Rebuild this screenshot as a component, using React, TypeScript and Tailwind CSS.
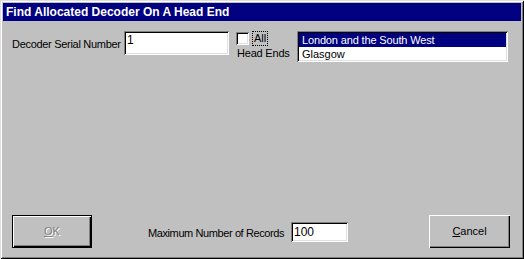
import React from "react";

const sunken =
  "shadow-[inset_1px_1px_0_#808080,inset_-1px_-1px_0_#ffffff,inset_2px_2px_0_#000000,inset_-2px_-2px_0_#dfdfdf]";

export default function App() {
  return (
    <div
      className="w-[524px] h-[259px] bg-[#c0c0c0] p-[3px] flex flex-col shadow-[inset_1px_1px_0_#dfdfdf,inset_-1px_-1px_0_#000000,inset_2px_2px_0_#ffffff,inset_-2px_-2px_0_#808080] text-black whitespace-nowrap"
      style={{ fontFamily: '"Liberation Sans", Arial, sans-serif' }}
    >
      <div className="h-[18px] bg-[#000080] text-white font-bold text-[12px] leading-[18px] pl-[3px]">
        Find Allocated Decoder On A Head End
      </div>
      <div className="flex-1 flex flex-col pl-[9px] pr-[11px] pt-[10px] pb-[8px]">
        <div className="flex items-start">
          <div className="h-[24px] flex items-center pt-[3px] text-[11px] w-[112px] tracking-[-0.3px]">
            Decoder Serial Number
          </div>
          <div className={`w-[105px] h-[24px] bg-white ${sunken} pl-[3px] pt-[2px] text-[12px] leading-[14px]`}>
            1
          </div>
          <div className="ml-[7px] pt-[1px] flex flex-col w-[61px]">
            <div className="flex items-center">
              <div className={`w-[13px] h-[13px] bg-white ${sunken}`} />
              <span className="ml-[4px] text-[11px] leading-[13px] outline outline-1 outline-dotted outline-black px-[1px]">All</span>
            </div>
            <div className="text-[11px] leading-[14px] mt-[1px] ml-[1px] tracking-[-0.2px]">Head Ends</div>
          </div>
          <div className={`w-[211px] h-[31px] bg-white ${sunken} p-[2px] text-[11px] leading-[14px]`}>
            <div className="bg-[#000080] text-white pl-[3px] h-[14px] tracking-[-0.15px]">London and the South West</div>
            <div className="pl-[3px] h-[14px]">Glasgow</div>
          </div>
        </div>
        <div className="flex-1" />
        <div className="flex items-center">
          <div className="w-[80px] h-[33px] border border-black shadow-[inset_1px_1px_0_#ffffff,inset_-1px_-1px_0_#000000,inset_-2px_-2px_0_#808080] flex items-center justify-center text-[11px] text-[#808080] [text-shadow:1px_1px_0_#ffffff]">
            <span className="underline underline-offset-1">O</span>K
          </div>
          <div className="ml-[56px] text-[11px] w-[143px] pt-[3px] tracking-[-0.4px]">Maximum Number of Records</div>
          <div className={`w-[57px] h-[20px] bg-white ${sunken} pl-[3px] pt-[3px] text-[12px] leading-[14px]`}>
            100
          </div>
          <div className="flex-1" />
          <div className="w-[81px] h-[33px] shadow-[inset_1px_1px_0_#ffffff,inset_-1px_-1px_0_#000000,inset_-2px_-2px_0_#808080] flex items-center justify-center text-[11px]">
            <span className="underline underline-offset-1">C</span>ancel
          </div>
        </div>
      </div>
    </div>
  );
}
